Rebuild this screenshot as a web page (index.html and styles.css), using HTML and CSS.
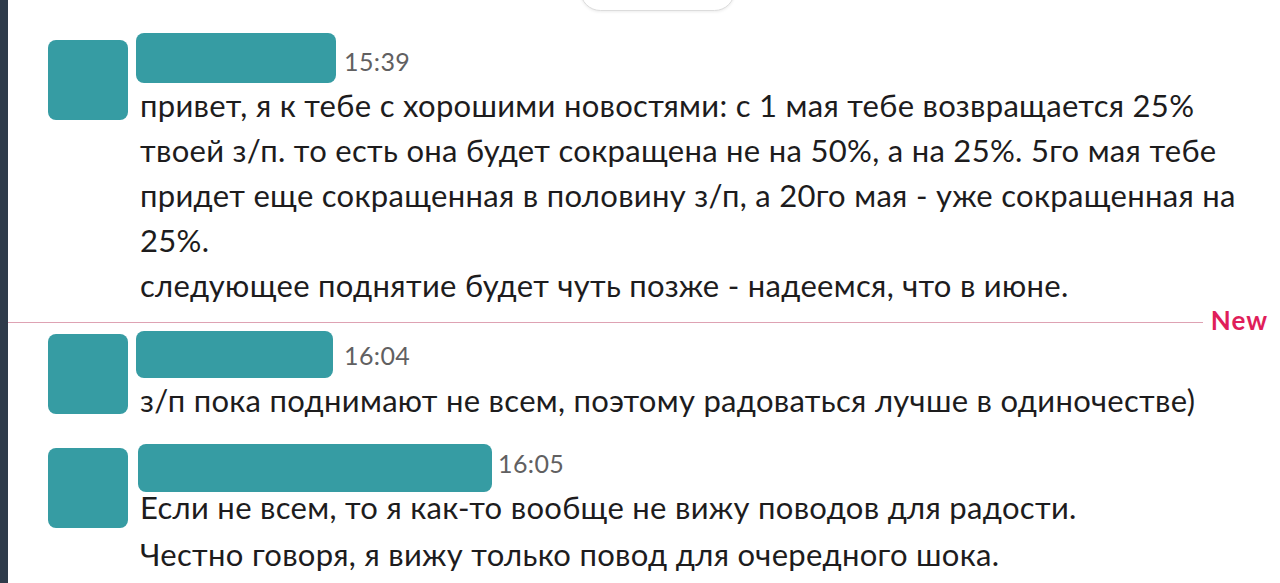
FILE: index.html
```html
<!DOCTYPE html>
<html lang="ru">
<head>
<meta charset="utf-8">
<title>Сообщения</title>
<link rel="stylesheet" href="styles.css">
</head>
<body>
<div class="app">
  <div class="sidebar-edge"></div>
  <main class="feed">
    <div class="date-pill"></div>

    <div class="msg msg--first">
      <div class="avatar"></div>
      <div class="msg-body">
        <div class="msg-header">
          <div class="name-bar name-bar--a"></div>
          <span class="time time--a">15:39</span>
        </div>
        <p class="msg-text">привет, я к тебе с хорошими новостями: с 1 мая тебе возвращается 25% твоей з/п. то есть она будет сокращена не на 50%, а на 25%. 5го мая тебе придет еще сокращенная в половину з/п, а 20го мая - уже сокращенная на 25%.</p>
        <p class="msg-text">следующее поднятие будет чуть позже - надеемся, что в июне.</p>
      </div>
    </div>

    <div class="new-divider">
      <span class="new-line"></span>
      <span class="new-label">New</span>
    </div>

    <div class="msg msg--second">
      <div class="avatar"></div>
      <div class="msg-body">
        <div class="msg-header">
          <div class="name-bar name-bar--b"></div>
          <span class="time time--b">16:04</span>
        </div>
        <p class="msg-text">з/п пока поднимают не всем, поэтому радоваться лучше в одиночестве)</p>
      </div>
    </div>

    <div class="msg msg--third">
      <div class="avatar"></div>
      <div class="msg-body">
        <div class="msg-header msg-header--short">
          <div class="name-bar name-bar--c"></div>
          <span class="time time--c">16:05</span>
        </div>
        <p class="msg-text">Если не всем, то я как-то вообще не вижу поводов для радости.</p>
        <p class="msg-text msg-text--spaced">Честно говоря, я вижу только повод для очередного шока.</p>
      </div>
    </div>
  </main>
</div>
</body>
</html>
```

FILE: styles.css
```css
* { box-sizing: border-box; }

html, body {
  margin: 0;
  padding: 0;
  background: #ffffff;
}

body {
  font-family: Lato, "Noto Sans", "Liberation Sans", sans-serif;
  color: #1d1c1d;
  width: 1280px;
  height: 583px;
  overflow: hidden;
}

.app {
  display: flex;
  height: 583px;
}

.sidebar-edge {
  width: 8px;
  flex: 0 0 8px;
  background: #2e3b4a;
}

.feed {
  position: relative;
  flex: 1;
  padding-top: 33px;
}

.date-pill {
  position: absolute;
  left: 572px;
  top: -30px;
  width: 155px;
  height: 41px;
  border: 1px solid #dcdcdc;
  border-radius: 21px;
  background: #fff;
  box-shadow: 0 1px 3px rgba(0, 0, 0, 0.08);
}

.msg {
  display: flex;
  padding-left: 40px;
  padding-right: 22px;
}

.avatar {
  width: 80px;
  height: 80px;
  flex: 0 0 80px;
  border-radius: 8px;
  background: #369ca3;
}

.msg--first .avatar { margin-top: 7px; }
.msg--second { padding-top: 3px; }
.msg--second .avatar { margin-top: 3px; }
.msg--third { padding-top: 21px; }
.msg--third .avatar { margin-top: 4px; }

.msg-body {
  flex: 1;
  margin-left: 12px;
  min-width: 0;
}

.msg-header {
  display: flex;
  align-items: flex-start;
  height: 50px;
}

.msg--second .msg-header { height: 47px; }
.msg-header--short { height: 41px; }

.name-bar {
  margin-left: -4px;
  border-radius: 8px;
  background: #369ca3;
  flex: 0 0 auto;
}

.name-bar--a { width: 200px; height: 50px; }
.name-bar--b { width: 197px; height: 47px; }
.name-bar--c { width: 354px; height: 48px; margin-left: -2px; }

.time {
  font-size: 25px;
  line-height: 29px;
  letter-spacing: 0.4px;
  color: #616061;
}

.time--a { margin-left: 8px; margin-top: 14px; }
.time--b { margin-left: 11px; margin-top: 10px; }
.time--c { margin-left: 6px; margin-top: 5px; }

.msg-text {
  margin: 0;
  font-size: 31px;
  line-height: 45px;
  letter-spacing: 0.3px;
  color: #1d1c1d;
}

.msg-text--spaced { margin-top: 2px; }

.new-divider {
  display: flex;
  align-items: flex-start;
  height: 12px;
  margin-top: 8px;
  padding-right: 12px;
}

.new-line {
  flex: 1;
  height: 1px;
  margin-top: 6px;
  background: #dea2b3;
}

.new-label {
  margin-left: 8px;
  margin-top: -2px;
  font-size: 26px;
  line-height: 12px;
  letter-spacing: 1px;
  font-weight: 700;
  color: #e01e5a;
}
```
